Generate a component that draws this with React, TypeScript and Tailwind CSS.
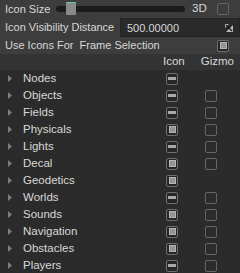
type CheckState = 'off' | 'on' | 'mixed'

const Check = ({ state }: { state: CheckState }) => {
  if (state === 'on')
    return (
      <div className="w-3 h-3 rounded-[2px] border border-[#6e6e6e] bg-[#262626] flex items-center justify-center">
        <div className="w-[7px] h-[7px] border border-[#b4b4b4] bg-[#949494]"></div>
      </div>
    )

  if (state === 'mixed')
    return (
      <div className="w-3 h-3 rounded-[2px] border border-[#6e6e6e] bg-[#262626] flex items-center justify-center">
        <div className="w-2 h-[3px] bg-[#a8a8a8]"></div>
      </div>
    )

  return <div className="w-3 h-3 rounded-[2px] border border-[#666666]"></div>
}

const rows: { name: string; icon: CheckState; gizmo: CheckState | null }[] = [
  { name: 'Nodes', icon: 'mixed', gizmo: null },
  { name: 'Objects', icon: 'mixed', gizmo: 'off' },
  { name: 'Fields', icon: 'mixed', gizmo: 'off' },
  { name: 'Physicals', icon: 'on', gizmo: 'off' },
  { name: 'Lights', icon: 'mixed', gizmo: 'off' },
  { name: 'Decal', icon: 'on', gizmo: 'off' },
  { name: 'Geodetics', icon: 'on', gizmo: null },
  { name: 'Worlds', icon: 'mixed', gizmo: 'off' },
  { name: 'Sounds', icon: 'on', gizmo: 'off' },
  { name: 'Navigation', icon: 'on', gizmo: 'off' },
  { name: 'Obstacles', icon: 'on', gizmo: 'off' },
  { name: 'Players', icon: 'mixed', gizmo: 'off' },
]

export default function App() {
  return (
    <div className="w-[240px] h-[273px] overflow-hidden bg-[#2b2b2b] text-[#d8d8d8] text-[11.5px] font-['Liberation_Sans',sans-serif]">
      <div className="bg-[#3d3d3d] h-[54px] flex flex-col text-[11px]">
        {/* icon size */}
        <div className="h-[18px] flex items-center pl-[5px]">
          <span className="w-[51px]">Icon Size</span>
          <div className="relative w-[129px] h-[6px] rounded-full bg-[#1c1c1c]">
            <div className="absolute left-[10px] top-[-4px] w-[10px] h-[13px] rounded-[1px] bg-[#8a8a8a] border-t border-[#6fc69a]"></div>
          </div>
          <span className="ml-[7px] w-[25px] text-[11.5px]">3D</span>
          <Check state="off" />
        </div>

        {/* distance */}
        <div className="h-[19px] flex items-center pl-[5px]">
          <span className="w-[115px]">Icon Visibility Distance</span>
          <div className="flex-1 h-[19px] bg-[#2a2a2a] border border-[#242424] flex items-center pl-[6px] pr-[6px]">
            <span className="flex-1 pt-[1px]">500.00000</span>
            <svg width="8" height="8" viewBox="0 0 8 8">
              <path d="M0 0 H4 L0 4 Z" fill="#b8b8b8" />
              <path d="M8 1 V8 H1 Z" fill="#b8b8b8" />
              <path d="M1 1 L7 7" stroke="#1a1a1a" strokeWidth="1.2" />
            </svg>
          </div>
        </div>

        {/* frame selection */}
        <div className="h-[17px] flex items-center pl-[5px] pr-[11px]">
          <span className="flex-1 whitespace-pre">Use Icons For  Frame Selection</span>
          <Check state="on" />
        </div>
      </div>

      <div className="bg-[#333333] h-[16px] flex items-center">
        <span className="ml-[163px]">Icon</span>
        <span className="ml-[16px]">Gizmo</span>
      </div>

      {rows.map((row) => (
        <div key={row.name} className="h-[17px] flex items-center">
          <svg className="ml-[8px]" width="4" height="7" viewBox="0 0 4 7">
            <path d="M0 0 L4 3.5 L0 7 Z" fill="#7c7c7c" />
          </svg>
          <span className="ml-[11px] w-[143px]">{row.name}</span>
          <Check state={row.icon} />
          <div className="ml-[27px]">{row.gizmo && <Check state={row.gizmo} />}</div>
        </div>
      ))}
    </div>
  )
}
